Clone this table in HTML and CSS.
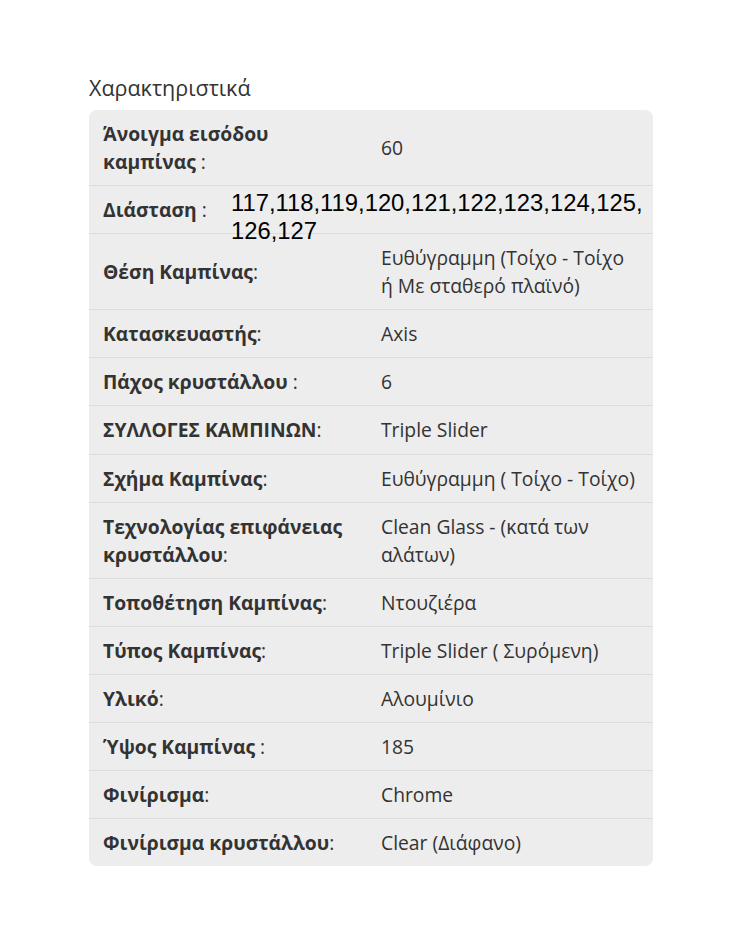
FILE: index.html
```html
<!DOCTYPE html>
<html lang="el">
<head>
    <meta charset="UTF-8">
    <meta name="viewport" content="width=device-width, initial-scale=1.0">
    <title>Χαρακτηριστικά</title>
    <link rel="stylesheet" href="styles.css">
</head>
<body>
    <div class="container">
        <h2 class="specs-title">Χαρακτηριστικά</h2>

        <table class="specs">
            <tr>
                <th>Άνοιγμα εισόδου καμπίνας<span class="colon"> :</span></th>
                <td>60</td>
            </tr>
            <tr>
                <th>Διάσταση<span class="colon"> :</span></th>
                <td><div class="dim-value">117,118,119,120,121,122,123,124,125,126,127</div></td>
            </tr>
            <tr>
                <th>Θέση Καμπίνας<span class="colon">:</span></th>
                <td>Ευθύγραμμη (Τοίχο - Τοίχο ή Με σταθερό πλαϊνό)</td>
            </tr>
            <tr>
                <th>Κατασκευαστής<span class="colon">:</span></th>
                <td>Axis</td>
            </tr>
            <tr>
                <th>Πάχος κρυστάλλου<span class="colon"> :</span></th>
                <td>6</td>
            </tr>
            <tr>
                <th>ΣΥΛΛΟΓΕΣ ΚΑΜΠΙΝΩΝ<span class="colon">:</span></th>
                <td>Triple Slider</td>
            </tr>
            <tr>
                <th>Σχήμα Καμπίνας<span class="colon">:</span></th>
                <td>Ευθύγραμμη ( Τοίχο - Τοίχο)</td>
            </tr>
            <tr>
                <th>Τεχνολογίας επιφάνειας κρυστάλλου<span class="colon">:</span></th>
                <td>Clean Glass - (κατά των αλάτων)</td>
            </tr>
            <tr>
                <th>Τοποθέτηση Καμπίνας<span class="colon">:</span></th>
                <td>Ντουζιέρα</td>
            </tr>
            <tr>
                <th>Τύπος Καμπίνας<span class="colon">:</span></th>
                <td>Triple Slider ( Συρόμενη)</td>
            </tr>
            <tr>
                <th>Υλικό<span class="colon">:</span></th>
                <td>Αλουμίνιο</td>
            </tr>
            <tr>
                <th>Ύψος Καμπίνας<span class="colon"> :</span></th>
                <td>185</td>
            </tr>
            <tr>
                <th>Φινίρισμα<span class="colon">:</span></th>
                <td>Chrome</td>
            </tr>
            <tr>
                <th>Φινίρισμα κρυστάλλου<span class="colon">:</span></th>
                <td>Clear (Διάφανο)</td>
            </tr>
        </table>
    </div>
</body>
</html>
```

FILE: styles.css
```css
body {
    font-family: "Open Sans", "Noto Sans", sans-serif;
    background-color: #fff;
    color: #333;
    margin: 0;
    padding: 0;
}

.container {
    width: 564px;
    margin: 0 0 0 89px;
    padding-top: 74px;
}

.specs-title {
    font-size: 21.5px;
    font-weight: normal;
    line-height: 28px;
    margin: 0 0 8px;
}

/* tabla de caracteristicas */
.specs {
    width: 100%;
    table-layout: fixed;
    border-collapse: separate;
    border-spacing: 0;
    background-color: #ededed;
    border-radius: 8px;
    overflow: hidden;
    font-size: 19.3px;
    line-height: 28px;
}

.specs th,
.specs td {
    text-align: left;
    vertical-align: middle;
    padding: 10px 14px 9.1px;
    border-top: 1px solid #dcdcdc;
}

.specs tr:first-child th,
.specs tr:first-child td {
    border-top: none;
}

.specs th {
    width: 250px;
    font-weight: bold;
}

.specs td {
    font-weight: normal;
    padding-right: 15px;
}

.colon {
    font-weight: normal;
}

/* el valor de la dimension se sale de la fila */
.dim-value {
    font-family: "Liberation Sans", Arial, sans-serif;
    font-size: 23.8px;
    line-height: 28px;
    color: #000;
    width: 421px;
    height: 28px;
    overflow-wrap: anywhere;
    margin: -7px 0 7px -150px;
}
```
